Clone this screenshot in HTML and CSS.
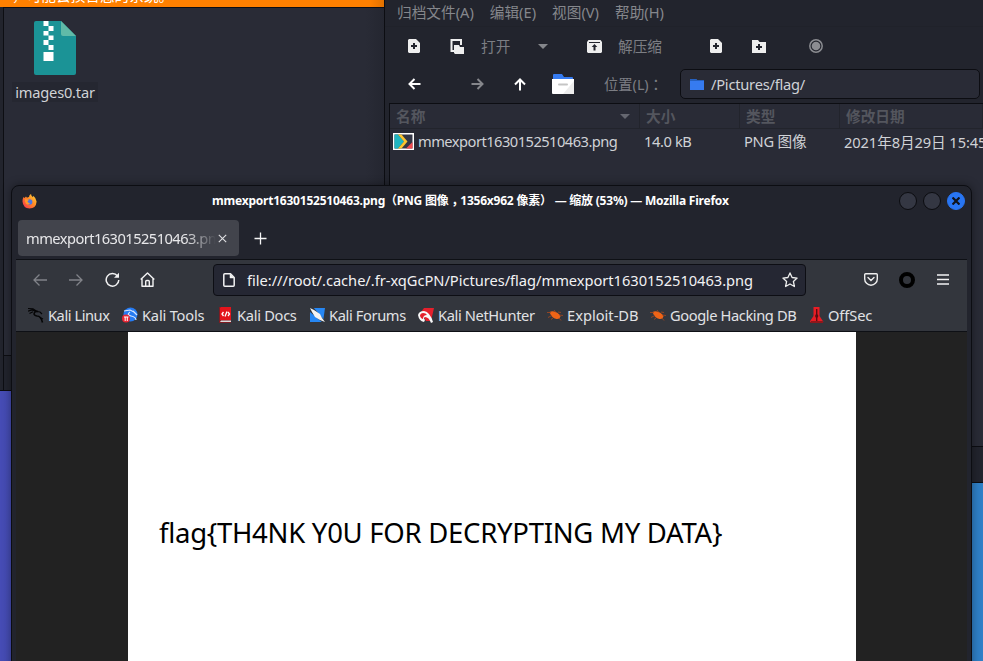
FILE: index.html
```
<!DOCTYPE html>
<html lang="zh-CN">
<head>
<meta charset="utf-8">
<title>Desktop</title>
<link rel="stylesheet" href="styles.css">
</head>
<body>
<main class="desktop">
  <section class="window files">
    <div class="warning"><span>，可能会损害您的系统。</span></div>
    <div class="files-view">
      <div class="file">
        <svg width="43" height="54" viewBox="0 0 43 54"><path fill="#1b9396" d="M2 0h25l15 15v37q0 2-2 2H2q-2 0-2-2V2q0-2 2-2z"/><path fill="#60bba8" d="M27 0l15 15H29q-2 0-2-2z"/><path fill="#fff" d="M9.500 0h5v5h-5zM14.500 5h5v5h-5zM9.500 10h5v4.500h-5zM14.500 14.500h5v4.500h-5zM9.500 19h5v5h-5zM14.500 24h5v5h-5zM9.500 31h10v9h-10z"/></svg>
        <span class="file-name">images0.tar</span>
      </div>
    </div>
    <div class="files-status"></div>
  </section>

  <section class="window archive">
    <nav class="menu"><span>归档文件(A)</span><span>编辑(E)</span><span>视图(V)</span><span>帮助(H)</span></nav>
    <div class="tools">
      <svg class="i-new" width="14" height="14" viewBox="0 0 14 14"><path fill="#eee" fill-rule="evenodd" d="M2 0h7l4 4v9l-1 1H2l-1-1V1zM6 4v2H4v2h2v2h2V8h2V6H8V4z"/></svg>
      <svg class="i-open" width="15" height="15" viewBox="0 0 15 15"><path fill="none" stroke="#eee" stroke-width="2" d="M4 12H1.500V1H11v5"/><path fill="#eee" d="M4 6h5l1 2h4v7H5l-1-1z"/></svg>
      <span class="t-open">打开</span>
      <i class="caret"></i>
      <svg class="i-extract" width="15" height="13" viewBox="0 0 15 13"><path fill="#eee" d="M1.500 0h12L15 2v10l-1 1H1l-1-1V2z"/><path fill="#22242d" d="M2 2h11v1H2zM7.500 4L4.700 7H6.500v3.500h2V7h1.800z"/></svg>
      <span class="t-extract">解压缩</span>
      <svg class="i-add" width="14" height="14" viewBox="0 0 14 14"><path fill="#eee" fill-rule="evenodd" d="M2 0h7l4 4v9l-1 1H2l-1-1V1zM6 4v2H4v2h2v2h2V8h2V6H8V4z"/></svg>
      <svg class="i-folder" width="14" height="13" viewBox="0 0 14 13"><path fill="#eee" fill-rule="evenodd" d="M0 0h6l1.500 2H14v11H0zM6 4v2H4v2h2v2h2V8h2V6H8V4z"/></svg>
      <svg class="i-stop" width="14" height="14" viewBox="0 0 14 14"><circle cx="7" cy="7" r="6.200" fill="none" stroke="#8b8c91" stroke-width="1.500"/><circle cx="7" cy="7" r="4.300" fill="#8b8c91"/></svg>
    </div>
    <div class="location">
      <svg width="13" height="12" viewBox="0 0 13 12" fill="none" stroke="#fff" stroke-width="2"><path d="M12.500 6H2M6.500 1L1.500 6l5 5"/></svg>
      <svg width="13" height="12" viewBox="0 0 13 12" fill="none" stroke="#85868b" stroke-width="2"><path d="M.5 6H11M6.500 1l5 5-5 5"/></svg>
      <svg width="12" height="13" viewBox="0 0 12 13" fill="none" stroke="#fff" stroke-width="2"><path d="M6 12.500V2M1 6.500l5-5 5 5"/></svg>
      <svg width="22" height="20" viewBox="0 0 22 20"><path fill="#367bf0" d="M1 1q0-1 1-1h8l2 3h8q1 0 1 1v3H1z"/><path fill="#fff" d="M0 5h22v14q0 1-1 1H1q-1 0-1-1z"/><path fill="#ededed" d="M22 7v13H11z"/><path stroke="#c5c5c5" stroke-width="2" stroke-linecap="round" d="M7 10.500h8"/></svg>
      <span class="t-location">位置(L)<span class="mark" lang="zh-TW">：</span></span>
      <div class="path"><svg width="14" height="11" viewBox="0 0 14 11"><path fill="#367bf0" d="M0 1q0-1 1-1h5l1 1h6q1 0 1 1v9H0z"/><path fill="#2560bf" d="M0 0h6l1 1h7v1H0z"/></svg><span>/Pictures/flag/</span></div>
    </div>
    <div class="list">
      <div class="cols head"><span class="sorted">名称<i class="caret dim"></i></span><span>大小</span><span>类型</span><span>修改日期</span></div>
      <div class="cols entry">
        <span class="c-name"><svg width="21" height="17" viewBox="0 0 21 17"><path fill="#fff" d="M0 0h21v17H0z"/><path fill="#343746" d="M1.500 1.500h18v14h-18z"/><path fill="#1fb5c0" d="M1.500 1.500H5l6 7-6 7H1.500z"/><path fill="#fcc52f" d="M5 1.500h3.500l6 7-6 7H5l6-7z"/><path fill="#f54b50" d="M19.500 9v6.500H13z"/></svg><b class="fname">mmexport1630152510463.png</b></span>
        <span class="c-size">14.0 kB</span><span class="c-type">PNG 图像</span><span class="c-date">2021年8月29日 15:45</span>
      </div>
    </div>
    <div class="archive-status"></div>
  </section>

  <section class="window firefox">
    <header class="title">
      <svg class="fx" width="15" height="15" viewBox="0 0 15 15"><defs><linearGradient id="fire" x1="1" y1="0" x2="0" y2="1"><stop offset="0" stop-color="#ffe13d"/><stop offset=".45" stop-color="#ff8a24"/><stop offset="1" stop-color="#f52c54"/></linearGradient></defs><path fill="url(#fire)" d="M1.500 3l1 1L4 2.500l1 1.200Q6 3 7 3q0-2 2-3 0 1.800 2 3.200l.3-1.400Q14 4 14.600 7.500q-.5 7-7.100 7-6.500-.5-7-7Q.3 5 1.500 3z"/><circle cx="7.600" cy="8" r="2.800" fill="#4b76e2"/><path fill="#ff9a2b" d="M3 5l4 .7-1.500 1.800Q6 9 8 9q-1 2-3 1.500Q2.500 8.500 3 5z"/></svg>
      <h1>mmexport1630152510463.png<span class="mark" lang="zh-TW">（</span>PNG 图像<span class="mark comma" lang="zh-CN">，</span>1356x962 像素<span class="mark" lang="zh-TW">）</span> — 缩放 (53%) — Mozilla Firefox</h1>
      <div class="controls"><i></i><i></i><i class="close"><svg width="8" height="8" viewBox="0 0 8 8"><path stroke="#10131a" stroke-width="2.200" d="M.5.5l7 7M7.500.5l-7 7"/></svg></i></div>
    </header>
    <div class="tabs">
      <div class="tab"><span class="tab-text">mmexport1630152510463.png</span><svg width="9" height="9" viewBox="0 0 9 9"><path stroke="#e0e0e3" stroke-width="1.100" d="M.8.8l7.400 7.400M8.200.8L.8 8.200"/></svg></div>
      <svg class="plus" width="13" height="13" viewBox="0 0 13 13"><path stroke="#f5f5f6" stroke-width="1.300" d="M6.500.5v12M.5 6.500h12"/></svg>
    </div>
    <div class="nav">
      <div class="nav-left">
        <svg width="14" height="12" viewBox="0 0 14 12" fill="none" stroke="#818389" stroke-width="1.300"><path d="M14 6H1M6.500.5L1 6l5.500 5.500"/></svg>
        <svg width="14" height="12" viewBox="0 0 14 12" fill="none" stroke="#818389" stroke-width="1.300"><path d="M0 6h13M7.500.5L13 6l-5.500 5.500"/></svg>
        <svg width="15" height="15" viewBox="0 0 15 15" fill="none" stroke="#f2f2f3" stroke-width="1.500"><path d="M12.500 4A6.300 6.300 0 1 0 13.800 8"/><path fill="#f2f2f3" stroke="none" d="M14 .8v5H9z"/></svg>
        <svg width="15" height="15" viewBox="0 0 15 15" fill="none" stroke="#f2f2f3" stroke-width="1.400" stroke-linejoin="round"><path d="M.7 7.500L7.500.9l6.800 6.600M2 6.500v7.700h11V6.500M5.700 14V9.500q0-1 1-1h1.600q1 0 1 1V14"/></svg>
      </div>
      <div class="url">
        <svg width="12" height="14" viewBox="0 0 12 14" fill="none" stroke="#f2f2f3" stroke-width="1.500" stroke-linejoin="round"><path d="M1.800.8h5.700l3.700 3.700v7.700q0 1-1 1H1.800q-1 0-1-1V1.800q0-1 1-1z"/><path fill="#f2f2f3" stroke-width=".5" d="M7 1v4h4z"/></svg>
        <span>file:///root/.cache/.fr-xqGcPN/Pictures/flag/mmexport1630152510463.png</span>
        <svg width="16" height="16" viewBox="0 0 16 16" fill="none" stroke="#eee" stroke-width="1.300" stroke-linejoin="round"><path d="M8 .9l2.100 4.600 5 .6-3.700 3.400 1 5L8 12l-4.400 2.500 1-5L.9 6.100l5-.6z"/></svg>
      </div>
      <div class="nav-right">
        <svg width="14" height="13" viewBox="0 0 14 13" fill="none" stroke="#eee" stroke-width="1.400" stroke-linecap="round"><path d="M1.700.7h10.600q1 0 1 1v4.200a6.300 6.300 0 0 1-12.600 0V1.700q0-1 1-1z"/><path d="M4 4.500l3 3 3-3"/></svg>
        <svg width="16" height="16" viewBox="0 0 16 16"><circle cx="8" cy="8" r="6" fill="none" stroke="#000" stroke-width="4"/></svg>
        <svg width="12" height="11" viewBox="0 0 12 11"><path stroke="#f2f2f3" stroke-width="1.300" d="M0 1h12M0 5.500h12M0 10h12"/></svg>
      </div>
    </div>
    <div class="bookmarks">
      <a><svg width="16" height="16" viewBox="0 0 16 16" fill="none" stroke="#050506" stroke-width="1.200"><path d="M0 1.500l5 .3 4 2.700M0 4.200L4 3l4 1.500M1.500 6.500L5 4.800"/><path stroke-width="1.600" d="M10 4.500C5.500 3.800 4.500 8.500 9 9q4 0 5.500 6.500"/><path d="M9 4.500l3 .5 2 2M12 10.500l3 1.500"/></svg><span class="w1">Kali Linux</span></a>
      <a><svg width="16" height="16" viewBox="0 0 16 16"><circle cx="8.500" cy="7.500" r="7" fill="#267bf2"/><path fill="none" stroke="#d8e8ff" stroke-width="1.200" d="M2 4l6-1 4 2M8 5q-4 3 1 4t5 4M11 4l4 4"/><circle cx="4" cy="11.500" r="4" fill="#ea2633"/><path stroke="#fff" d="M2 10h4.500M3.200 10v4M5.300 10v4"/></svg><span class="w2">Kali Tools</span></a>
      <a><svg width="14" height="16" viewBox="0 0 14 16"><path fill="#801b22" d="M0 0h12v16H0z"/><path fill="#e3141c" d="M2 0h10v13H1V1z"/><path fill="#ddd" d="M2 13.500h10V15H1z"/><path fill="none" stroke="#fff" stroke-width="1.300" d="M4.500 5L3 7l1.500 2M9 5l1.500 2L9 9M8 4.500l-2 5"/></svg><span class="w3">Kali Docs</span></a>
      <a><svg width="16" height="16" viewBox="0 0 16 16"><path fill="#2687f4" d="M1 1h15l-2 14H1z"/><path fill="#33363c" d="M0 0h4l12 14-2 2L1 5z"/><path fill="#f4f4f4" d="M1 1l4 2 6 4 2 4 3 4-5-2-5-3-3-5z"/></svg><span class="w4">Kali Forums</span></a>
      <a><svg width="16" height="16" viewBox="0 0 16 16"><path fill="#e5202c" d="M6 1h10l-3 13H8L3 5z"/><path fill="#f8f8f8" d="M0 8q1-4 6-4 6 1 9 11l-2 1q-2-6-6-6-2 1 0 3l-1 2Q1 14 0 8z"/><path fill="#e5202c" d="M2 8q1-2 3-2 3 0 4 2-4 0-4 4-3-1-3-4z"/></svg><span class="w5">Kali NetHunter</span></a>
      <a><svg class="bug" width="16" height="16" viewBox="0 0 16 16"><path fill="#f06417" d="M2.500 5q3-1.500 6 0 4 1.500 5 4.500-1 3-4 2.500-5-1-7-7z"/><path fill="none" stroke="#a8471d" stroke-width=".8" d="M0 5.500h4M1 10.500l4-2M7 3l2 2.500M11 5l3 .5M6 11l-2 1.500M12 11l2 2.500M12 8l4 .5"/></svg><span class="w6">Exploit-DB</span></a>
      <a><svg class="bug" width="16" height="16" viewBox="0 0 16 16"><path fill="#f06417" d="M2.500 5q3-1.500 6 0 4 1.500 5 4.500-1 3-4 2.500-5-1-7-7z"/><path fill="none" stroke="#a8471d" stroke-width=".8" d="M0 5.500h4M1 10.500l4-2M7 3l2 2.500M11 5l3 .5M6 11l-2 1.500M12 11l2 2.500M12 8l4 .5"/></svg><span class="w7">Google Hacking DB</span></a>
      <a><svg width="14" height="16" viewBox="0 0 14 16"><path fill="#e91c24" d="M3.500 0h6v9l4 6H-.5l4-6z"/><path fill="#5b0d12" d="M6 2h1.400v5l1 2-1 2v4H6v-4L5 9l1-2z"/><path fill="#8f171b" d="M1 14h12v2H0z"/></svg><span class="w8">OffSec</span></a>
    </div>
    <div class="page"><div class="image">flag{TH4NK Y0U FOR DECRYPTING MY DATA}</div></div>
  </section>
</main>
</body>
</html>
```
FILE: styles.css
```
* { box-sizing: border-box; }
body { margin: 0; font: 14.67px "Noto Sans", "Noto Sans CJK SC", sans-serif; color: #d0d2d6; }
svg { display: block; flex: none; }
.mark { font-family: "Noto Sans CJK TC", sans-serif; line-height: 1; }
.comma { font-family: "Noto Sans CJK SC", sans-serif; padding-left: 3px; margin-right: -3px; }
.desktop { position: relative; width: 983px; height: 661px; overflow: hidden; background: linear-gradient(90deg, #464cb5, #2f80c7 99%); white-space: nowrap; }
.window { position: absolute; display: flex; flex-direction: column; background: #22242d; }

.files { left: 0; top: 0; width: 385px; height: 391px; border-bottom: 1px solid #0b0c11; }
.warning { height: 7px; flex: none; background: linear-gradient(90deg, #ff8000 96%, #df7000); color: #fff; overflow: hidden; display: flex; align-items: flex-end; padding-left: 12px; font-size: 14.67px; }
.warning span { line-height: 20px; margin-bottom: 2px; }
.files-view { flex: 1; margin-left: 3px; border-top: 1px solid #0d0e13; border-left: 1px solid #0d0e13; background: linear-gradient(90deg, #292b36 95%, #242630); padding: 13px 0 0 9px; }
.file { width: 84px; display: flex; flex-direction: column; align-items: center; }
.file-name { line-height: 20px; margin-top: 7px; background: #252731; padding: 0 3px; letter-spacing: -.22px; }
.files-status { height: 35px; margin-left: 3px; border-top: 1px solid #0d0e13; border-left: 1px solid #0d0e13; flex: none; }

.archive { left: 384px; top: 0; width: 599px; height: 483px; border-left: 1px solid #0c0d12; border-bottom: 1px solid #0c0d12; }
.menu { height: 27px; border-bottom: 1px solid #20222a; display: flex; gap: 16px; padding: 2px 0 0 12px; color: #85878c; line-height: 20px; font-size: 14.67px; flex: none; }
.tools { height: 38px; flex: none; display: flex; align-items: center; color: #7c7e84; }
.tools span { margin-top: -2px; }
.i-new { margin-left: 22px; }
.i-open { margin-left: 29px; }
.t-open { margin-left: 16px; width: 30px; }
.caret { margin-left: 27px; border: 5px solid transparent; border-top-color: #85878c; border-bottom: 0; }
.i-extract { margin-left: 39px; }
.t-extract { margin-left: 16px; width: 45px; }
.i-add { margin-left: 46px; }
.i-folder { margin-left: 29px; }
.i-stop { margin-left: 43px; }
.location { height: 38px; flex: none; display: grid; grid-template-columns: 63px 43px 38px 52px 76px 300px; padding-left: 23px; align-items: center; }
.t-location { color: #7c7e84; font-size: 14.3px; margin-top: -2px; }
.path { height: 30px; border: 1px solid #0c0d12; border-radius: 5px; background: #292b36; display: flex; align-items: center; gap: 7px; padding-left: 9px; color: #d0d2d6; letter-spacing: -.23px; }
.list { flex: 1; margin-left: 4px; background: #292b36; border: 1px solid #0c0d12; border-right: 0; }
.cols { display: grid; grid-template-columns: 250px 100px 100px 143px; }
.head { height: 25px; font-weight: 700; color: #54565e; border-bottom: 1px solid #22242c; line-height: 24px; }
.head span { border-right: 1px solid #22242c; padding-left: 6px; }
.head .sorted { display: flex; align-items: center; }
.caret.dim { margin-left: 195px; border-top-color: #656770; }
.entry { line-height: 24px; height: 26px; }
.c-name { display: flex; align-items: center; gap: 4px; padding-left: 3px; height: 25px; }
.fname { font-weight: 400; letter-spacing: -.52px; margin-top: -1px; }
.c-size, .c-type, .c-date { padding-left: 4px; }
.c-size { letter-spacing: -.4px; }
.c-type { letter-spacing: -.25px; }
.c-date { letter-spacing: -.1px; padding-top: 1px; }
.archive-status { height: 35px; flex: none; }

.firefox { left: 11px; top: 185px; width: 961px; height: 490px; border: 1px solid #0c0d12; border-radius: 8px 8px 0 0; box-shadow: 0 0 10px #0006; padding: 0 4px 0 3px; }
.title { height: 30px; flex: none; display: grid; grid-template-columns: 189px 1fr auto; align-items: center; padding-left: 7px; }
.title h1 { margin: 0 0 0 1px; font-size: 12px; color: #fff; line-height: 20px; letter-spacing: -.22px; }
.controls { display: flex; gap: 6px; padding-right: 2px; }
.controls i { width: 18px; height: 18px; border-radius: 50%; border: 1px solid #0b0c10; background: #343743; }
.controls .close { border-color: #2875f2; background: #2875f2; display: grid; place-items: center; }
.tabs { height: 43px; flex: none; display: flex; align-items: center; padding: 0 0 0 3px; }
.tab { width: 221px; height: 36px; border-radius: 4px; background: #42444c; display: flex; align-items: center; padding-left: 8px; gap: 2px; margin-top: 1px; color: #e8e8ea; }
.tab-text { width: 190px; overflow: hidden; letter-spacing: -.55px; -webkit-mask-image: linear-gradient(90deg, #000 84%, transparent); mask-image: linear-gradient(90deg, #000 84%, transparent); }
.plus { margin-left: 15px; margin-top: 2px; }
.nav { height: 40px; flex: none; margin-left: 1px; background: #33363d; border-top: 1px solid #0e1015; display: grid; grid-template-columns: 197px 593px 1fr; align-items: center; }
.nav-left { display: grid; grid-template-columns: 36px 36px 35px 20px; padding-left: 17px; align-items: center; }
.url { height: 32px; border: 1px solid #0d0e14; border-radius: 4px; background: #252733; color: #f2f2f4; display: flex; align-items: center; padding: 0 7px 0 9px; gap: 12px; }
.url span { flex: 1; letter-spacing: -.03px; }
.nav-right { display: grid; grid-template-columns: 35px 38px 12px; padding-left: 58px; align-items: center; }
.bookmarks { height: 33px; flex: none; margin-left: 1px; background: #33363d; border-bottom: 1px solid #0e1015; display: flex; align-items: center; padding-left: 12px; color: #e1e2e5; }
.bookmarks a { display: flex; align-items: center; gap: 4px; }
.bookmarks span { line-height: 20px; margin-top: -1px; }
.w1 { width: 74px; letter-spacing: -.45px; } .w2 { width: 77px; letter-spacing: -.2px; }
.w3 { width: 72px; letter-spacing: -.3px; } .w4 { width: 89px; letter-spacing: -.38px; }
.w5 { width: 109px; letter-spacing: -.38px; } .w6 { width: 83px; }
.w7 { width: 140px; letter-spacing: -.4px; } .w8 { width: 60px; letter-spacing: -.1px; }
.page { flex: 1; margin-left: 1px; background: #222; padding-left: 112px; }
.image { width: 728px; height: 100%; background: #fff; color: #000; padding: 181px 0 0 31px; font-size: 27.5px; line-height: 40px; letter-spacing: -.27px; }
```
